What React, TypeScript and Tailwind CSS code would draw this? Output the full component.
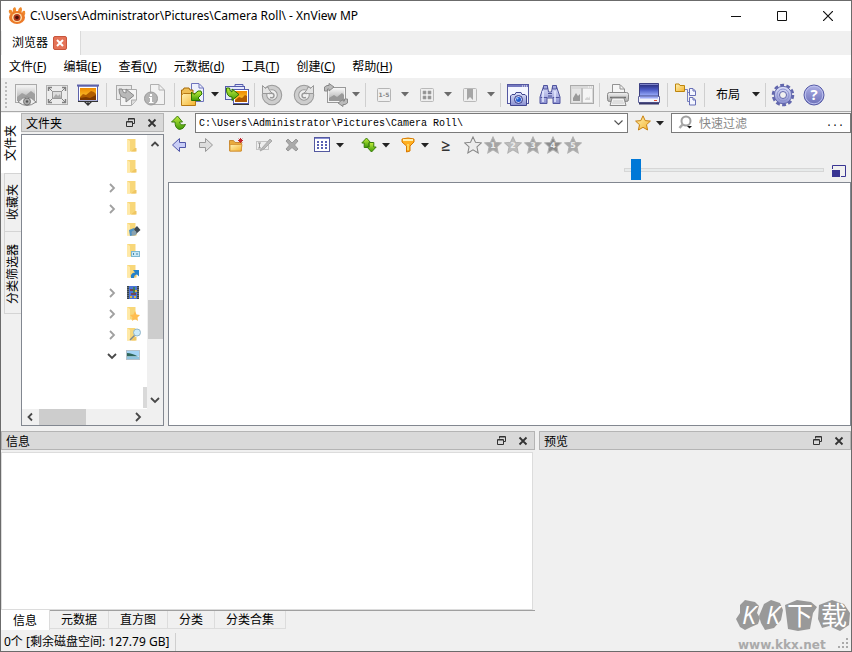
import type { ReactNode } from "react";

const ui = "font-['Noto_Sans','Noto_Sans_CJK_SC',sans-serif]";

function Svg({ size = 24, children }: { size?: number; children: ReactNode }) {
  return (
    <svg width={size} height={size} viewBox={`0 0 ${size} ${size}`} fill="none" className="block shrink-0">
      {children}
    </svg>
  );
}

function Defs() {
  return (
    <svg width="0" height="0" className="absolute">
      <defs>
        <linearGradient id="gray" x1="0" y1="0" x2="0" y2="1">
          <stop offset="0" stopColor="#f2f2f2" />
          <stop offset="1" stopColor="#a9a9a9" />
        </linearGradient>
        <linearGradient id="orange" x1="0" y1="0" x2="0" y2="1">
          <stop offset="0" stopColor="#ef8a00" />
          <stop offset="1" stopColor="#ffd23c" />
        </linearGradient>
        <linearGradient id="yellow" x1="0" y1="0" x2="1" y2="1">
          <stop offset="0" stopColor="#fff3b5" />
          <stop offset="1" stopColor="#f5b32e" />
        </linearGradient>
        <linearGradient id="blue" x1="0" y1="0" x2="0" y2="1">
          <stop offset="0" stopColor="#dfe3fb" />
          <stop offset="1" stopColor="#8a8fd0" />
        </linearGradient>
        <linearGradient id="help" x1="0" y1="0" x2="0" y2="1">
          <stop offset="0" stopColor="#aeb1e6" />
          <stop offset="1" stopColor="#6b6fb8" />
        </linearGradient>
        <linearGradient id="green" x1="0" y1="0" x2="0" y2="1">
          <stop offset="0" stopColor="#c4ef3e" />
          <stop offset="1" stopColor="#3f9a06" />
        </linearGradient>
        <linearGradient id="scan" x1="0" y1="0" x2="0" y2="1">
          <stop offset="0" stopColor="#23266f" />
          <stop offset=".5" stopColor="#4a5ac4" />
          <stop offset="1" stopColor="#9fb2ff" />
        </linearGradient>
      </defs>
    </svg>
  );
}

function AppLogo() {
  return (
    <Svg size={18}>
      <path d="M2 7Q0 5 1 3Q4 2 5 6ZM5 5Q4 1 7 0Q9 2 8 5ZM10 5Q10 1 13 0Q15 2 13 6ZM14 7Q14 3 17 4Q18 7 16 9Z" fill="#f08a2c" />
      <ellipse cx="9" cy="10.500" rx="8" ry="6.500" fill="#ec7a28" />
      <ellipse cx="9" cy="10.500" rx="5" ry="4.500" fill="#ffe2ac" />
      <circle cx="9" cy="10.500" r="3.500" fill="#b43a1c" />
      <circle cx="9" cy="10.500" r="1.800" fill="#4a120b" />
    </Svg>
  );
}

function PictureEye() {
  return (
    <Svg>
      <rect x="1.500" y="1.500" width="21" height="18" fill="#efefef" stroke="#aaa" />
      <rect x="3" y="3" width="18" height="15" fill="url(#gray)" />
      <path d="M3 14L8 10L12 12L17 8L21 11V18H3Z" fill="#a0a0a0" />
      <path d="M4 19Q13 9 22 19Q13 26 4 19Z" fill="#ededed" stroke="#888" />
      <circle cx="13" cy="18.500" r="3.500" fill="#aaa" stroke="#777" />
      <circle cx="13" cy="18.500" r="1.200" fill="#555" />
    </Svg>
  );
}

function FullScreen() {
  return (
    <Svg>
      <rect x="1.500" y="2.500" width="21" height="19" fill="#ececec" stroke="#b0b0b0" />
      <path d="M3.500 8V4.500H7M17 4.500H20.500V8M20.500 16V19.500H17M7 19.500H3.500V16" stroke="#808080" strokeWidth="1.500" />
      <path d="M4 5L8 9M20 5L16 9M4 19L8 15M20 19L16 15" stroke="#808080" />
      <rect x="7.500" y="8.500" width="9" height="7" fill="#ddd" stroke="#999" />
      <path d="M8 15L11 11L13 13L15 11L16 15Z" fill="#aaa" />
    </Svg>
  );
}

function Slideshow() {
  return (
    <Svg>
      <path d="M8 18L12 22L16 18M12 18V22" stroke="#333" strokeWidth="1.300" />
      <rect x="2.500" y="3" width="19" height="15" fill="#fff" stroke="#5d62ab" />
      <rect x="4" y="5" width="16" height="12" fill="url(#orange)" />
      <path d="M4 14L7 11L10 12L15 8L18 9L20 11V17H4Z" fill="#b25d00" />
      <path d="M4 17V15L10 14L14 15L20 12V17Z" fill="#7d3800" />
      <path d="M1 2.500H23" stroke="#5d62ab" strokeWidth="2" />
      <path d="M2 18.500H22" stroke="#333" />
    </Svg>
  );
}

function ConvertGray() {
  return (
    <Svg>
      <rect x="1.500" y="2.500" width="15" height="14" fill="#e9e9e9" stroke="#aaa" />
      <path d="M5.500 6.500H21.500V17L16.500 22.500H5.500Z" fill="#f4f4f4" stroke="#aaa" />
      <path d="M21 17H16.500V22" fill="#ddd" stroke="#aaa" />
      <path d="M4 6Q4 15 11 15V19L19 12.500L11 6V10Q8 11 7 6Z" fill="#b9b9b9" stroke="#888" />
    </Svg>
  );
}

function InfoGray() {
  return (
    <Svg>
      <path d="M7.500 1.500H16L21.500 7V21.500H7.500Z" fill="#f2f2f2" stroke="#b0b0b0" />
      <path d="M16 1.500V7H21" stroke="#b0b0b0" />
      <circle cx="8" cy="15.500" r="6.500" fill="#b4b4b4" stroke="#999" />
      <path d="M7 11H9V13H7ZM6 14H9V19H10.500V20H6V19H7V15H6Z" fill="#fff" />
    </Svg>
  );
}

function FolderOpen() {
  return (
    <Svg>
      <path d="M11.500 .5H19L23.500 5V18.500H11.500Z" fill="#edf0fc" stroke="#6d72bc" />
      <path d="M19 1V5H23" stroke="#6d72bc" />
      <path d="M1.500 21V7H3L4 5H9L10 7H13V21Z" fill="#efbf55" stroke="#a66a0b" />
      <path d="M3.500 10.500H15.500V22.500H1.500V12Z" fill="url(#yellow)" stroke="#b67913" />
      <path d="M21 8L22 11L18 15L20.500 17.500H11.500V9L14 11.500L18 8Z" fill="url(#green)" stroke="#287400" />
    </Svg>
  );
}

function PicturesConvert() {
  return (
    <Svg>
      <path d="M10 3V1.500H18V3" fill="#dfe3fa" stroke="#555cac" />
      <rect x=".5" y="3.500" width="19" height="13" fill="#e6eafc" stroke="#555cac" />
      <rect x="8.500" y="6.500" width="15" height="14" fill="#fff" stroke="#555cac" />
      <rect x="10" y="8" width="12" height="11" fill="url(#orange)" />
      <path d="M10 17L14 14L17 15L20 12L22 13V19H10Z" fill="#b05a00" />
      <path d="M8 21.500H24" stroke="#333" />
      <path d="M1.500 5Q1 14 7 14V17.500L14 11.500L7 6V9Q5 9 4.500 5Z" fill="url(#green)" stroke="#267200" />
    </Svg>
  );
}

function Rotate({ right }: { right?: boolean }) {
  return (
    <Svg>
      <g transform={right ? "translate(24 0) scale(-1 1)" : undefined}>
        <circle cx="12" cy="12" r="7.500" stroke="#999" strokeWidth="5.500" />
        <circle cx="12" cy="12" r="7.500" stroke="#cdcdcd" strokeWidth="3.500" />
        <path d="M2.500 2.500L5.500 5.500Q6 4.500 8 4L9.500 7.500L12.500 10.500H2.500Z" fill="#e3e3e3" stroke="#999" />
        <path d="M10 14.500Q14 15.500 14 12.500Q14 9.500 9 10.500" stroke="#999" strokeWidth="1.500" />
      </g>
    </Svg>
  );
}

function TransformIcon() {
  return (
    <Svg>
      <rect x="3.500" y="4.500" width="18" height="15" fill="#f4f4f4" stroke="#999" />
      <rect x="5" y="6" width="15" height="12" fill="url(#gray)" />
      <path d="M5 15L10 12L13 14L18 10L20 12V18H5Z" fill="#999" />
      <path d="M.5 8V4L3 2.500H5V.5L10 4L5 8V6H3.500V8ZM23.500 16V20L21 21.500H19V23.500L14 20L19 16.500V18H20.500V16Z" fill="#bbb" stroke="#888" />
    </Svg>
  );
}

function RangeIcon() {
  return (
    <Svg size={14}>
      <rect x=".5" y=".5" width="13" height="13" rx="1" fill="#f0f0f0" stroke="#b5b5b5" />
      <text x="7" y="9" textAnchor="middle" fontSize="6" fontFamily="DejaVu Sans" fontWeight="bold" fill="#888">1-5</text>
    </Svg>
  );
}

function GridIcon() {
  return (
    <Svg size={14}>
      <rect x=".5" y=".5" width="13" height="13" rx="1" fill="#eee" stroke="#b9b9b9" />
      <path d="M3 3H6V6H3ZM8 3H11V6H8ZM3 8H6V11H3ZM8 8H11V11H8Z" fill="#909090" stroke="#a5a5a5" strokeWidth=".6" />
    </Svg>
  );
}

function BookmarkIcon() {
  return (
    <Svg size={14}>
      <rect x=".5" y=".5" width="13" height="13" rx="1" fill="#eee" stroke="#b9b9b9" />
      <path d="M4 1H10V12L7 9L4 12Z" fill="#a5a5a5" />
    </Svg>
  );
}

function CaptureIcon() {
  return (
    <Svg>
      <rect x="1.500" y="1.500" width="21" height="19" fill="#f4f6ff" stroke="#5457a1" />
      <path d="M2 2H22V4H2Z" fill="#7478bf" />
      <path d="M16 3H17M18 3H19M20 3H21" stroke="#fff" />
      <path d="M4.500 13L6 11.500H9L10 9.500H15L16 11.500H19L20.500 13V22.500H4.500Z" fill="url(#blue)" stroke="#40458e" />
      <circle cx="12.500" cy="16.500" r="4" fill="#c5cbf5" stroke="#363c86" />
      <circle cx="12.500" cy="16.500" r="2.500" fill="#1f5ad0" />
      <circle cx="11.500" cy="15.500" r="1" fill="#9cc6ff" />
    </Svg>
  );
}

function Binoculars() {
  return (
    <Svg>
      <path d="M5.500 3.500H9.500L10.500 9H13.500L14.500 3.500H18.500L22 14V20.500H15V15H9V20.500H2V14Z" fill="url(#blue)" stroke="#50549f" />
      <path d="M5.500 2.500H9.500V6H5.500ZM14.500 2.500H18.500V6H14.500Z" fill="#a3a8dd" stroke="#50549f" />
      <path d="M2.500 14.500H9M15 14.500H21.500" stroke="#50549f" />
      <path d="M5 8V19M17 8V19" stroke="#e6eaff" strokeWidth="1.500" />
      <path d="M10 10.500H14M10 13H14" stroke="#454a91" />
    </Svg>
  );
}

function CompareIcon() {
  return (
    <Svg>
      <rect x=".5" y="2.500" width="23" height="18" fill="#d9d9d9" stroke="#aaa" />
      <path d="M18 4H19M20 4H21M22 4H23" stroke="#fff" />
      <rect x="2" y="6" width="9" height="13" fill="#e6e6e6" />
      <path d="M3 15L6 10L8 13L10 11V18H3Z" fill="#9a9a9a" />
      <rect x="13" y="6" width="9" height="13" fill="#f5f5f5" />
      <path d="M15 16L17 14L19 15L20 13V17H15Z" fill="#d5d5d5" />
      <path d="M12 5V20" stroke="#aaa" />
    </Svg>
  );
}

function PrinterIcon() {
  return (
    <Svg>
      <path d="M6.500 10V1.500H14L18.500 6V10" fill="#f6f6f6" stroke="#929292" />
      <path d="M14 2V6H18" stroke="#929292" />
      <rect x="1.500" y="9.500" width="21" height="9" rx="2" fill="url(#gray)" stroke="#888" />
      <path d="M4 14.500H20" stroke="#6f6f6f" strokeWidth="1.500" />
      <path d="M6 15H18L20 22.500H4Z" fill="#f1f1f1" stroke="#888" />
      <path d="M7 18H17M6 20H18" stroke="#ccc" />
    </Svg>
  );
}

function ScannerIcon() {
  return (
    <Svg>
      <path d="M2.500 .5H21.500V13H2.500Z" fill="url(#scan)" stroke="#3d4183" />
      <path d="M3 1.500H21" stroke="#7d83c9" />
      <path d="M1.500 13.500H22.500V19.500H1.500Z" fill="#f1f2fb" stroke="#60649d" />
      <path d="M3 14.500H21" stroke="#9ba9f5" strokeWidth="2" />
      <path d="M17 17.500H20" stroke="#e04d31" />
      <path d="M2 19.500H22V21.500H2Z" fill="#36376a" />
    </Svg>
  );
}

function TreeIcon() {
  return (
    <Svg>
      <path d="M1.500 8.500V1H5L6 2.500H10.500V8.500Z" fill="url(#yellow)" stroke="#bd850c" />
      <path d="M11 6.500H13.500V18.500H16M13.500 9.500H16" stroke="#7780c0" />
      <path d="M15.500 5.500H19L21.500 8V12.500H15.500ZM15.500 14.500H19L21.500 17V22H15.500Z" fill="#f4f6ff" stroke="#6870b7" />
      <path d="M19 6V8H21M19 15V17H21" stroke="#6870b7" />
    </Svg>
  );
}

function GearIcon() {
  return (
    <Svg>
      <circle cx="12" cy="12" r="9.500" stroke="#6267ad" strokeWidth="3.500" strokeDasharray="3.730 2.240" />
      <circle cx="12" cy="12" r="8.700" fill="url(#blue)" stroke="#6267ad" />
      <circle cx="12" cy="12" r="6" stroke="#8c92d0" />
      <circle cx="12" cy="12" r="3.500" fill="#f0f0f0" stroke="#6267ad" />
    </Svg>
  );
}

function HelpIcon() {
  return (
    <Svg>
      <circle cx="12" cy="12" r="10" fill="url(#help)" stroke="#575ca7" />
      <circle cx="12" cy="12" r="8.800" stroke="#bcc0ee" />
      <text x="12" y="17" textAnchor="middle" fontSize="15" fontFamily="Open Sans" fontWeight="bold" fill="#fff">?</text>
    </Svg>
  );
}

const STAR = "M8 .8L10.200 5.600L15.400 6.100L11.500 9.700L12.600 15L8 12.300L3.400 15L4.500 9.700L.6 6.100L5.800 5.600Z";

function UpIcon() {
  return (
    <Svg size={16}>
      <path d="M.5 7L6.500 1L11.500 7H8.500Q9 11 14.500 9.500Q12.500 14.500 8.500 14.500Q4 13.500 4 7Z" fill="url(#green)" stroke="#397d0a" />
    </Svg>
  );
}

function Arrow({ back }: { back?: boolean }) {
  return (
    <Svg size={16}>
      <path
        d={back ? "M1.500 8L8.500 1.500V5.500H14.500V10.500H8.500V14.500Z" : "M14.500 8L7.500 1.500V5.500H1.500V10.500H7.500V14.500Z"}
        fill={back ? "#c8cdf6" : "#ddd"}
        stroke={back ? "#5056a8" : "#999"}
      />
    </Svg>
  );
}

function NewFolder() {
  return (
    <Svg size={16}>
      <path d="M1.500 14V3.500H5.500L7 5.500H13.500V14Z" fill="#e8ab3e" stroke="#c98a35" />
      <path d="M2 7.500H14L13 14H2Z" fill="url(#yellow)" stroke="#d99a3a" />
      <path d="M12.500 1V6M10 3.500H15M10.700 1.700L14.300 5.300M14.300 1.700L10.700 5.300" stroke="#c3262d" />
    </Svg>
  );
}

function RenameIcon() {
  return (
    <Svg size={16}>
      <rect x=".5" y="4.500" width="12" height="8" fill="#eee" stroke="#c4c4c4" />
      <path d="M2 6H5M3.500 6V11M2 11H5" stroke="#999" />
      <path d="M6 11L14 2L16 4L8 12L4 14Z" fill="#bbb" stroke="#aaa" />
    </Svg>
  );
}

function DeleteIcon() {
  return (
    <Svg size={16}>
      <path d="M2 4L4 2L8 6L12 2L14 4L10.500 8L14 12L12 14L8 10.500L4 14L2 12L5.500 8Z" fill="#aaa" stroke="#999" />
    </Svg>
  );
}

function ViewIcon() {
  return (
    <Svg size={16}>
      <rect x=".5" y=".5" width="15" height="14" fill="#fff" stroke="#5459a0" />
      <path d="M1 1.500H15" stroke="#8a91d6" />
      <path d="M3 5H13M3 8H13M3 11H13" stroke="#5961b3" strokeWidth="2" strokeDasharray="2 2" />
    </Svg>
  );
}

function SortIcon() {
  return (
    <Svg size={16}>
      <path d="M.8 6L5.500 1L10 6H7.800V10.500H3.200V6Z" fill="url(#green)" stroke="#397d0a" />
      <path d="M6 10H8.200V5.500H12.800V10H15.200L10.500 15Z" fill="url(#green)" stroke="#397d0a" />
    </Svg>
  );
}

function FunnelIcon() {
  return (
    <Svg size={16}>
      <path d="M2 2Q8 0 14 2V5L10 9V14L6.500 15V9L2 5Z" fill="#ffaf20" stroke="#d77800" />
      <path d="M3 3H13" stroke="#fff0ae" strokeWidth="2" />
      <path d="M8 7V13" stroke="#ffe06c" strokeWidth="1.500" />
    </Svg>
  );
}

function RatingStar({ n }: { n: number }) {
  const fills = ["#ececec", "#a4a4a4", "#bdbdbd", "#a4a4a4", "#8c8c8c", "#aaa"];
  return (
    <svg width="18" height="18" viewBox="0 0 16 16" className="block">
      <path d={STAR} fill={fills[n]} stroke={n ? "#b0b0b0" : "#858585"} strokeWidth=".9" />
      {n > 0 && (
        <text x="8" y="11" textAnchor="middle" fontSize="7" fontFamily="DejaVu Sans" fontWeight="bold" fill="#eee">{n}</text>
      )}
    </svg>
  );
}

function Caret({ label, dim }: { label: string; dim?: boolean }) {
  return (
    <button aria-label={label} className="w-2">
      <svg width="8" height="5" viewBox="0 0 8 5" className="block">
        <path d="M0 0H8L4 4.500Z" fill={dim ? "#6b6b6b" : "#222"} />
      </svg>
    </button>
  );
}

function Tool({ label, children }: { label: string; children: ReactNode }) {
  return (
    <button aria-label={label} title={label} className="flex shrink-0 items-center justify-center">
      {children}
    </button>
  );
}

function Group({ className, children }: { className: string; children: ReactNode }) {
  return (
    <div className={`flex h-6 shrink-0 items-center border-l border-[#cfcfcf] ${className}`}>{children}</div>
  );
}

function Chevron({ dir, dark = true }: { dir: "up" | "down" | "left" | "right"; dark?: boolean }) {
  const paths = {
    up: "M1.500 7L5 3.500L8.500 7",
    down: "M1 3L5 7L9 3",
    left: "M7 1.500L3.500 5L7 8.500",
    right: "M3 1L7 5L3 9",
  };
  return (
    <Svg size={10}>
      <path d={paths[dir]} stroke={dark ? "#484848" : "#a0a0a0"} strokeWidth="1.800" />
    </Svg>
  );
}

function DockTitle({ title }: { title: string }) {
  return (
    <header className="flex h-[19px] shrink-0 items-center border border-[#b4b4b4] bg-[#d9d9d9] pr-1.5 pl-1">
      <h2 className="flex-1 pt-0.5 text-xs">{title}</h2>
      <button aria-label="浮动" className="mr-3">
        <Svg size={9}>
          <path d="M2.500 2.500V.5H8.500V5.500H6.500M.5 3.500H6.500V8.500H.5ZM2 1H8M1 4H6" stroke="#333" />
        </Svg>
      </button>
      <button aria-label="关闭">
        <Svg size={10}>
          <path d="M1.500 1.500L8.500 8.500M8.500 1.500L1.500 8.500" stroke="#333" strokeWidth="1.800" />
        </Svg>
      </button>
    </header>
  );
}

type FolderKind = "plain" | "objects" | "contacts" | "link" | "video" | "favorites" | "search" | "pictures";

function FolderIcon({ kind }: { kind: FolderKind }) {
  if (kind === "video")
    return (
      <Svg size={16}>
        <rect x="1" y="1" width="12" height="13" fill="#39424c" />
        <path d="M3 1H11V14H3Z" fill="#4a74d8" />
        <path d="M2 2V14M12 2V14" stroke="#8f9a96" strokeDasharray="1 1" />
        <path d="M4 5H9M5 9H10" stroke="#7e3a2c" strokeWidth="1.500" />
        <path d="M8 2V8" stroke="#38833c" strokeWidth="1.500" />
        <path d="M4 12H6M8 12H10M9 6H11" stroke="#dbb942" strokeWidth="2" />
      </Svg>
    );
  if (kind === "pictures")
    return (
      <Svg size={16}>
        <rect x=".5" y="2.500" width="13" height="9" fill="#fff" stroke="#b5c1c9" />
        <path d="M1 3H13V8H1Z" fill="#a4d4f5" />
        <path d="M1 5Q6 5 12 8.500H1Z" fill="#2f6659" />
        <path d="M1 8.500H13V11H1Z" fill="#8fc4df" />
      </Svg>
    );
  return (
    <Svg size={16}>
      <path d="M1 1H9.500V13.500H1Z" fill="#f8d779" />
      <path d="M1 1L4 3V14L1 13Z" fill="#ffe9a7" />
      <path d="M9 10H10.500V13.500H5Z" fill="#efc662" />
      {kind === "objects" && (
        <>
          <path d="M3 8L8 6L9 13L4 14Z" fill="#4e91c4" />
          <path d="M8 7L11 4L14.500 8L10 12Z" fill="#3f4a51" />
          <circle cx="8" cy="11" r="2.500" fill="#8aa3b0" />
        </>
      )}
      {kind === "contacts" && (
        <>
          <rect x="5.500" y="8.500" width="8" height="5" fill="#c8e7f5" stroke="#7cb7d1" />
          <path d="M7.500 10V12M10 11H12" stroke="#478bad" />
        </>
      )}
      {kind === "link" && <path d="M5 14Q4 9 9 8.500L7 6H13V12.500L11 10.500Q8 10.500 8 14Z" fill="#2581ca" />}
      {kind === "favorites" && (
        <path d="M9 5L10.500 8.500L14 9L11.500 11.500L12 15L9 13L6 15L6.500 11.500L4 9L7.500 8.500Z" fill="#ffbd4f" />
      )}
      {kind === "search" && (
        <>
          <path d="M9 8L4 13" stroke="#7b8790" strokeWidth="1.500" />
          <circle cx="11" cy="5.500" r="3.500" fill="#cbeaf9" stroke="#90b6c9" />
        </>
      )}
    </Svg>
  );
}

const folders: { kind: FolderKind; mark?: "right" | "down" }[] = [
  { kind: "plain" },
  { kind: "plain" },
  { kind: "plain", mark: "right" },
  { kind: "plain", mark: "right" },
  { kind: "objects" },
  { kind: "contacts" },
  { kind: "link" },
  { kind: "video", mark: "right" },
  { kind: "favorites", mark: "right" },
  { kind: "search", mark: "right" },
  { kind: "pictures", mark: "down" },
];

const menus = [
  ["文件", "F"],
  ["编辑", "E"],
  ["查看", "V"],
  ["元数据", "d"],
  ["工具", "T"],
  ["创建", "C"],
  ["帮助", "H"],
];

function TitleBar() {
  return (
    <header className="flex h-[30px] shrink-0 items-center bg-white pl-[7px]">
      <AppLogo />
      <h1 className="ml-1 flex-1 text-xs">C:\Users\Administrator\Pictures\Camera Roll\ - XnView MP</h1>
      <button aria-label="最小化" className="flex w-[46px] justify-center">
        <Svg size={10}><path d="M0 5.500H10" stroke="#111" /></Svg>
      </button>
      <button aria-label="最大化" className="flex w-[46px] justify-center">
        <Svg size={10}><path d="M.5 .5H9.500V9.500H.5Z" stroke="#111" /></Svg>
      </button>
      <button aria-label="关闭" className="flex w-[46px] justify-center">
        <Svg size={10}><path d="M0 0L10 10M10 0L0 10" stroke="#111" strokeWidth="1.200" /></Svg>
      </button>
    </header>
  );
}

function Toolbar() {
  return (
    <div role="toolbar" className="flex h-[34px] shrink-0 items-center border-b border-[#aaa] bg-[#f0f0f0]">
      <svg width="13" height="26" viewBox="0 0 13 26" className="shrink-0">
        <path d="M5 0V26" stroke="#bcbcbc" strokeWidth="2" strokeDasharray="2 2" />
      </svg>
      <div className="flex w-[92px] shrink-0 gap-[7px]">
        <Tool label="查看"><PictureEye /></Tool>
        <Tool label="全屏"><FullScreen /></Tool>
        <Tool label="幻灯片"><Slideshow /></Tool>
      </div>
      <Group className="w-[68px] justify-center gap-1">
        <Tool label="转换"><ConvertGray /></Tool>
        <Tool label="属性"><InfoGray /></Tool>
      </Group>
      <Group className="w-20 justify-between px-[5px]">
        <Tool label="打开"><FolderOpen /></Tool>
        <Caret label="打开选项" />
        <Tool label="批量转换"><PicturesConvert /></Tool>
      </Group>
      <Group className="w-[111px] gap-2 pl-[5px]">
        <Tool label="向左旋转"><Rotate /></Tool>
        <Tool label="向右旋转"><Rotate right /></Tool>
        <div className="flex items-center gap-1">
          <Tool label="变换"><TransformIcon /></Tool>
          <Caret label="变换选项" dim />
        </div>
      </Group>
      <Group className="w-[135px] justify-between pr-[5px] pl-[11px]">
        <Tool label="评级"><RangeIcon /></Tool>
        <Caret label="评级选项" dim />
        <Tool label="颜色标签"><GridIcon /></Tool>
        <Caret label="颜色标签选项" dim />
        <Tool label="标记"><BookmarkIcon /></Tool>
        <Caret label="标记选项" dim />
      </Group>
      <Group className="w-[99px] justify-between px-[5px]">
        <Tool label="截图"><CaptureIcon /></Tool>
        <Tool label="搜索"><Binoculars /></Tool>
        <Tool label="比较"><CompareIcon /></Tool>
      </Group>
      <Group className="w-[68px] justify-between px-1.5">
        <Tool label="打印"><PrinterIcon /></Tool>
        <Tool label="扫描"><ScannerIcon /></Tool>
      </Group>
      <Group className="w-[37px] justify-center">
        <Tool label="目录树"><TreeIcon /></Tool>
      </Group>
      <Group className="w-[61px] justify-between pr-[5px] pl-[11px]">
        <button className="text-xs">布局</button>
        <Caret label="布局选项" />
      </Group>
      <Group className="gap-[7px] px-[5px]">
        <Tool label="设置"><GearIcon /></Tool>
        <Tool label="帮助"><HelpIcon /></Tool>
      </Group>
    </div>
  );
}

function FolderDock() {
  return (
    <section className="flex w-[143px] shrink-0 flex-col gap-0.5">
      <DockTitle title="文件夹" />
      <div className="flex min-h-0 flex-1 flex-col border border-[#828790] bg-white">
        <div className="flex min-h-0 flex-1">
          <ul role="tree" aria-label="文件夹" className="flex-1 overflow-hidden">
            {folders.map((f, i) => (
              <li key={i} role="treeitem" className="flex h-[21px] items-center pl-[85px]">
                <span className="w-[19px]">{f.mark && <Chevron dir={f.mark} dark={f.mark === "down"} />}</span>
                <FolderIcon kind={f.kind} />
              </li>
            ))}
          </ul>
          <div className="flex w-1 flex-col justify-end bg-white">
            <span className="mb-px h-[21px] bg-[#d9d9d9]" />
          </div>
          <div className="flex w-4 flex-col items-center bg-[#f0f0f0] py-1">
            <Chevron dir="up" />
            <span className="flex-4" />
            <span className="h-[39px] w-[15px] bg-[#cdcdcd]" />
            <span className="flex-[1.5]" />
            <Chevron dir="down" />
          </div>
        </div>
        <div className="flex h-4 items-center bg-[#f0f0f0] pr-[20px] pl-[3px]">
          <Chevron dir="left" />
          <span className="ml-1 h-4 w-[47px] bg-[#cdcdcd]" />
          <span className="flex-1" />
          <Chevron dir="right" />
        </div>
      </div>
    </section>
  );
}

function BrowserPane() {
  return (
    <section className="flex min-w-0 flex-1 flex-col">
      <div className="flex h-5 shrink-0 items-center">
        <div className="flex w-[27px] pl-[3px]"><Tool label="上级目录"><UpIcon /></Tool></div>
        <div className="flex h-5 flex-1 items-center border border-[#7a7a7a] bg-white pr-1">
          <input
            aria-label="路径"
            className="min-w-0 flex-1 pt-0.5 pl-[3px] font-['Liberation_Mono',monospace] text-[10px] text-black outline-none"
            defaultValue="C:\Users\Administrator\Pictures\Camera Roll\"
          />
          <button aria-label="历史路径">
            <svg width="9" height="6" viewBox="0 0 9 6" fill="none"><path d="M.5 .5L4.500 4.500L8.500 .5" stroke="#555" strokeWidth="1.200" /></svg>
          </button>
        </div>
        <div className="flex w-[43px] items-center gap-[5px] pl-[7px]">
          <Tool label="收藏">
            <Svg size={16}><path d={STAR} fill="url(#yellow)" stroke="#c88010" /></Svg>
          </Tool>
          <Caret label="收藏选项" />
        </div>
        <label className="flex h-5 w-[180px] items-center border border-[#7a7a7a] bg-white pr-1.5 pl-1.5 text-xs">
          <Svg size={16}>
            <circle cx="8" cy="6" r="4.500" stroke="#a0a0a0" strokeWidth="2" />
            <path d="M5 9L1.500 13" stroke="#aaa" strokeWidth="2.500" />
            <path d="M9 11H14L11.500 13.500Z" fill="#111" />
          </Svg>
          <input aria-label="快速过滤" placeholder="快速过滤" className="ml-[5px] min-w-0 flex-1 pt-0.5 outline-none placeholder:text-[#888]" />
          <button className="pt-0.5 font-['Liberation_Mono',monospace] text-[10px]">...</button>
        </label>
      </div>

      <div className="flex h-6 shrink-0 items-center pl-[3px]">
        <div className="flex w-[57px] gap-[11px]">
          <Tool label="后退"><Arrow back /></Tool>
          <Tool label="前进"><Arrow /></Tool>
        </div>
        <div className="flex w-[86px] gap-3">
          <Tool label="新建文件夹"><NewFolder /></Tool>
          <Tool label="重命名"><RenameIcon /></Tool>
          <Tool label="删除"><DeleteIcon /></Tool>
        </div>
        <div className="flex w-[47px] items-center gap-1.5">
          <Tool label="视图"><ViewIcon /></Tool>
          <Caret label="视图选项" />
        </div>
        <div className="flex w-[39px] items-center gap-[5px]">
          <Tool label="排序"><SortIcon /></Tool>
          <Caret label="排序选项" />
        </div>
        <div className="flex w-[41px] items-center gap-[5px]">
          <Tool label="过滤"><FunnelIcon /></Tool>
          <Caret label="过滤选项" />
        </div>
        <button className="w-[23px] text-left font-['Open_Sans',sans-serif] text-base leading-none font-semibold text-[#333]">≥</button>
        <div className="flex gap-0.5">
          {[0, 1, 2, 3, 4, 5].map((n) => (
            <Tool key={n} label={`${n} 星`}><RatingStar n={n} /></Tool>
          ))}
        </div>
      </div>

      <div className="flex h-[25px] shrink-0 items-center justify-end gap-2 pr-[5px]">
        <input
          type="range"
          aria-label="缩略图大小"
          defaultValue={3}
          className="h-[21px] w-[200px] appearance-none bg-transparent [&::-webkit-slider-runnable-track]:h-1 [&::-webkit-slider-runnable-track]:border [&::-webkit-slider-runnable-track]:border-[#d6d6d6] [&::-webkit-slider-runnable-track]:bg-[#e7eaea] [&::-webkit-slider-thumb]:mt-[-10px] [&::-webkit-slider-thumb]:h-[21px] [&::-webkit-slider-thumb]:w-2.5 [&::-webkit-slider-thumb]:appearance-none [&::-webkit-slider-thumb]:bg-[#0078d7]"
        />
        <Tool label="缩略图">
          <Svg size={14}>
            <path d="M.5 6V2.500H13.500V13.500H9" stroke="#393593" />
            <path d="M0 7H8V14H0Z" fill="#393593" />
          </Svg>
        </Tool>
      </div>

      <main aria-label="图片" className="min-h-0 flex-1 border border-[#828790] bg-white" />
    </section>
  );
}

function Watermark() {
  return (
    <svg width="120" height="68" viewBox="0 0 120 68" className="pointer-events-none absolute right-0 bottom-0">
      <g fill="#999">
        <path d="M9 22L14 17L24 19L28 23L26 30L29 35L27 41L20 44L14 47L9 44L5 36L9 30Z" />
        <path d="M33 21L40 17L49 20L52 27L50 37L43 45L34 47L30 40L28 33Z" />
        <path d="M54 22L66 17L80 19L86 24L82 30L79 46L67 48L57 46Z" />
        <path d="M88 22L101 17L113 21L119 30L118 42L109 48L98 43L91 45L87 36Z" />
      </g>
      <g fill="#fff" fontFamily="Open Sans, Noto Sans CJK SC" textAnchor="middle">
        <text x="18" y="41" fontSize="25" fontStyle="italic">K</text>
        <text x="42" y="41" fontSize="25" fontStyle="italic">K</text>
        <text x="69" y="42" fontSize="26">下</text>
        <text x="103" y="42" fontSize="26">载</text>
      </g>
      <text x="7" y="66" fontFamily="DejaVu Sans" fontSize="12" fontWeight="bold" fill="#aaa">www.kkx.net</text>
      <path d="M111 64H113M107 64H109M115 64H117M111 60H113M115 60H117M115 56H117" stroke="#aaa" strokeWidth="2" />
    </svg>
  );
}

export default function App() {
  const tab = "h-[18px] border-r border-b border-[#dcdcdc] bg-[#f0f0f0] px-[11px] pt-px";
  const side = "flex items-center justify-center border border-r-0 border-[#d4d4d4] w-[17px]";
  const turned = "rotate-180 [text-orientation:sideways] [writing-mode:vertical-rl]";
  return (
    <div className={`relative flex h-screen flex-col overflow-hidden border border-[#6b6b6b] bg-[#f0f0f0] text-xs text-black ${ui}`}>
      <Defs />
      <TitleBar />
      <div role="tablist" aria-label="窗口" className="flex h-6 shrink-0 items-stretch pl-px">
        <div className="flex items-center gap-[5px] border-r border-[#dadada] bg-white pr-[13px] pl-2.5">
          <button role="tab" aria-selected="true">浏览器</button>
          <button aria-label="关闭标签" className="flex size-3.5 items-center justify-center rounded-xs border border-[#c8553c] bg-[#e57357]">
            <Svg size={8}><path d="M1 1L7 7M7 1L1 7" stroke="#fff" strokeWidth="2" /></Svg>
          </button>
        </div>
      </div>
      <nav className="flex h-[23px] shrink-0 items-center gap-[17px] bg-white px-2">
        {menus.map(([name, key]) => (
          <button key={name}>
            {name}(<u>{key}</u>)
          </button>
        ))}
      </nav>
      <Toolbar />

      <div className="flex min-h-0 flex-1 pt-px">
        <div role="tablist" aria-label="侧栏" className="flex w-5 shrink-0 flex-col items-end">
          <button role="tab" aria-selected="true" className="flex h-[60px] w-5 items-center justify-center bg-white">
            <span className={turned}>文件夹</span>
          </button>
          <button role="tab" className={`h-[59px] ${side}`}>
            <span className={turned}>收藏夹</span>
          </button>
          <button role="tab" className={`h-[82px] border-t-0 pt-1 ${side}`}>
            <span className={turned}>分类筛选器</span>
          </button>
        </div>
        <FolderDock />
        <div className="w-1 shrink-0" />
        <BrowserPane />
      </div>

      <div className="mt-[5px] flex h-[199px] shrink-0 gap-1">
        <section className="flex w-[534px] shrink-0 flex-col">
          <DockTitle title="信息" />
          <div className="mt-0.5 mr-0.5 flex-1 border border-[#dcdcdc] bg-white" />
          <div role="tablist" aria-label="详细" className="flex h-5 shrink-0 items-start">
            <button role="tab" aria-selected="true" className="h-5 border-r border-[#dcdcdc] bg-white px-3 pt-0.5">信息</button>
            <div className="flex flex-1 border-t border-[#a0a0a0]">
              {["元数据", "直方图", "分类", "分类合集"].map((t) => (
                <button key={t} role="tab" className={tab}>{t}</button>
              ))}
            </div>
          </div>
        </section>
        <section className="min-w-0 flex-1">
          <DockTitle title="预览" />
        </section>
      </div>

      <footer className="flex h-[21px] shrink-0 items-end">
        <span className="border-r border-[#cfcfcf] pr-1.5 pl-[3px] leading-[18px]">0个 [剩余磁盘空间: 127.79 GB]</span>
      </footer>
      <Watermark />
    </div>
  );
}
